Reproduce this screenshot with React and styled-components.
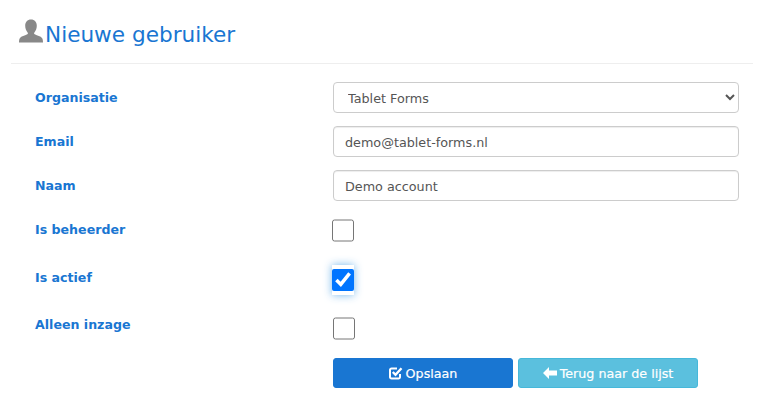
import styled, { createGlobalStyle } from "styled-components";

const GlobalStyle = createGlobalStyle`
  html, body {
    margin: 0;
    padding: 0;
    background: #fff;
    font-family: "DejaVu Sans", Verdana, sans-serif;
  }
`;

const Page = styled.div`
  width: 763px;
  height: 411px;
  overflow: hidden;
  padding: 0 10px 0 11px;
  box-sizing: border-box;
`;

const Header = styled.div`
  display: flex;
  align-items: flex-end;
  height: 63px;
  padding-left: 8px;
  border-bottom: 1px solid #eeeeee;
  box-sizing: content-box;
`;

const Title = styled.h1`
  margin: 0 0 15px 0;
  font-size: 21.6px;
  font-weight: 400;
  line-height: 26px;
  color: #1976d2;
`;

const UserIcon = styled.svg`
  width: 24px;
  height: 24px;
  margin: 0 2px 20px 0;
  fill: #888888;
`;

const Form = styled.form`
  display: flex;
  flex-direction: column;
  padding: 18px 14px 0 24px;
`;

const Row = styled.div`
  display: grid;
  grid-template-columns: 298px 406px;
  height: ${(p) => p.$height}px;
  align-items: start;
`;

const Label = styled.label`
  font-size: 12.6px;
  font-weight: 700;
  line-height: 16px;
  padding-top: ${(p) => p.$top}px;
  color: #1976d2;
`;

const Input = styled.input`
  width: 100%;
  height: 31px;
  box-sizing: border-box;
  padding: 1px 11px 0;
  border: 1px solid #cccccc;
  border-radius: 4px;
  font: 400 12.75px "DejaVu Sans", sans-serif;
  color: #555555;
  background: #fff;
  box-shadow: inset 0 1px 1px rgba(0, 0, 0, 0.075);
`;

const Select = styled.select`
  width: 100%;
  height: 31px;
  box-sizing: border-box;
  padding: 1px 10px 0;
  border: 1px solid #cccccc;
  border-radius: 4px;
  font: 400 12.75px "DejaVu Sans", sans-serif;
  color: #555555;
  background: #fff;
`;

const Check = styled.input`
  width: 22px;
  height: 23px;
  margin: ${(p) => p.$top}px 0 0 ${(p) => p.$left || 0}px;
`;

const ActiveCheck = styled(Check)`
  height: 30px;
  box-shadow: 0 0 8px rgba(102, 175, 233, 0.9);
`;

const Buttons = styled.div`
  display: flex;
  gap: 5px;
`;

const Button = styled.button`
  display: flex;
  align-items: center;
  justify-content: center;
  gap: 3px;
  width: 180px;
  height: 30px;
  padding: 0;
  border: 1px solid ${(p) => p.$border};
  border-radius: 3px;
  background: ${(p) => p.$bg};
  color: #fff;
  font: 400 12.7px "DejaVu Sans", sans-serif;
  -webkit-text-stroke: 0.2px #fff;
`;

const CheckGlyph = () => (
  <svg width="14" height="14" viewBox="0 0 14 14">
    <path d="M11 8v3a1.500 1.500 0 0 1-1.500 1.500h-7A1.500 1.500 0 0 1 1 11V4a1.500 1.500 0 0 1 1.500-1.500H8" fill="none" stroke="#fff" strokeWidth="2" />
    <path d="M3.800 6l2.700 2.800L12.500 2.300" fill="none" stroke="#fff" strokeWidth="2.400" />
  </svg>
);

const ArrowGlyph = () => (
  <svg width="14" height="12" viewBox="0 0 14 12">
    <path d="M0 6l6-6v3.500h8v5H6V12z" fill="#fff" />
  </svg>
);

export default function App() {
  return (
    <Page>
      <GlobalStyle />
      <Header>
        <UserIcon viewBox="0 0 24 24">
          <path d="M12 .5c3.600 0 5.800 2.600 5.800 6.300 0 2.800-1 5.200-2.400 6.600-.5.600-.4 1.500.3 1.900 2.700 1.400 6 2 7.300 3.700.7.900 1 2.300 1 4.500H0c0-2.200.3-3.600 1-4.500 1.300-1.700 4.600-2.300 7.300-3.700.7-.4.800-1.300.3-1.900C7.200 12 6.200 9.600 6.200 6.800 6.200 3.100 8.400.5 12 .5z" />
        </UserIcon>
        <Title>Nieuwe gebruiker</Title>
      </Header>
      <Form>
        <Row $height={44}>
          <Label $top={8}>Organisatie</Label>
          <Select defaultValue="Tablet Forms">
            <option>Tablet Forms</option>
          </Select>
        </Row>
        <Row $height={44}>
          <Label $top={8}>Email</Label>
          <Input defaultValue="demo@tablet-forms.nl" />
        </Row>
        <Row $height={48}>
          <Label $top={8}>Naam</Label>
          <Input defaultValue="Demo account" />
        </Row>
        <Row $height={49}>
          <Label $top={4}>Is beheerder</Label>
          <Check type="checkbox" $left={-1} $top={1} />
        </Row>
        <Row $height={49}>
          <Label $top={3}>Is actief</Label>
          <ActiveCheck type="checkbox" defaultChecked $left={-1} $top={-2} />
        </Row>
        <Row $height={42}>
          <Label $top={1}>Alleen inzage</Label>
          <Check type="checkbox" $top={1} />
        </Row>
        <Row $height={30}>
          <span />
          <Buttons>
            <Button type="button" $bg="#1976d2" $border="#1976d2">
              <CheckGlyph /> Opslaan
            </Button>
            <Button type="button" $bg="#5bc0de" $border="#46b8da">
              <ArrowGlyph /> Terug naar de lijst
            </Button>
          </Buttons>
        </Row>
      </Form>
    </Page>
  );
}
